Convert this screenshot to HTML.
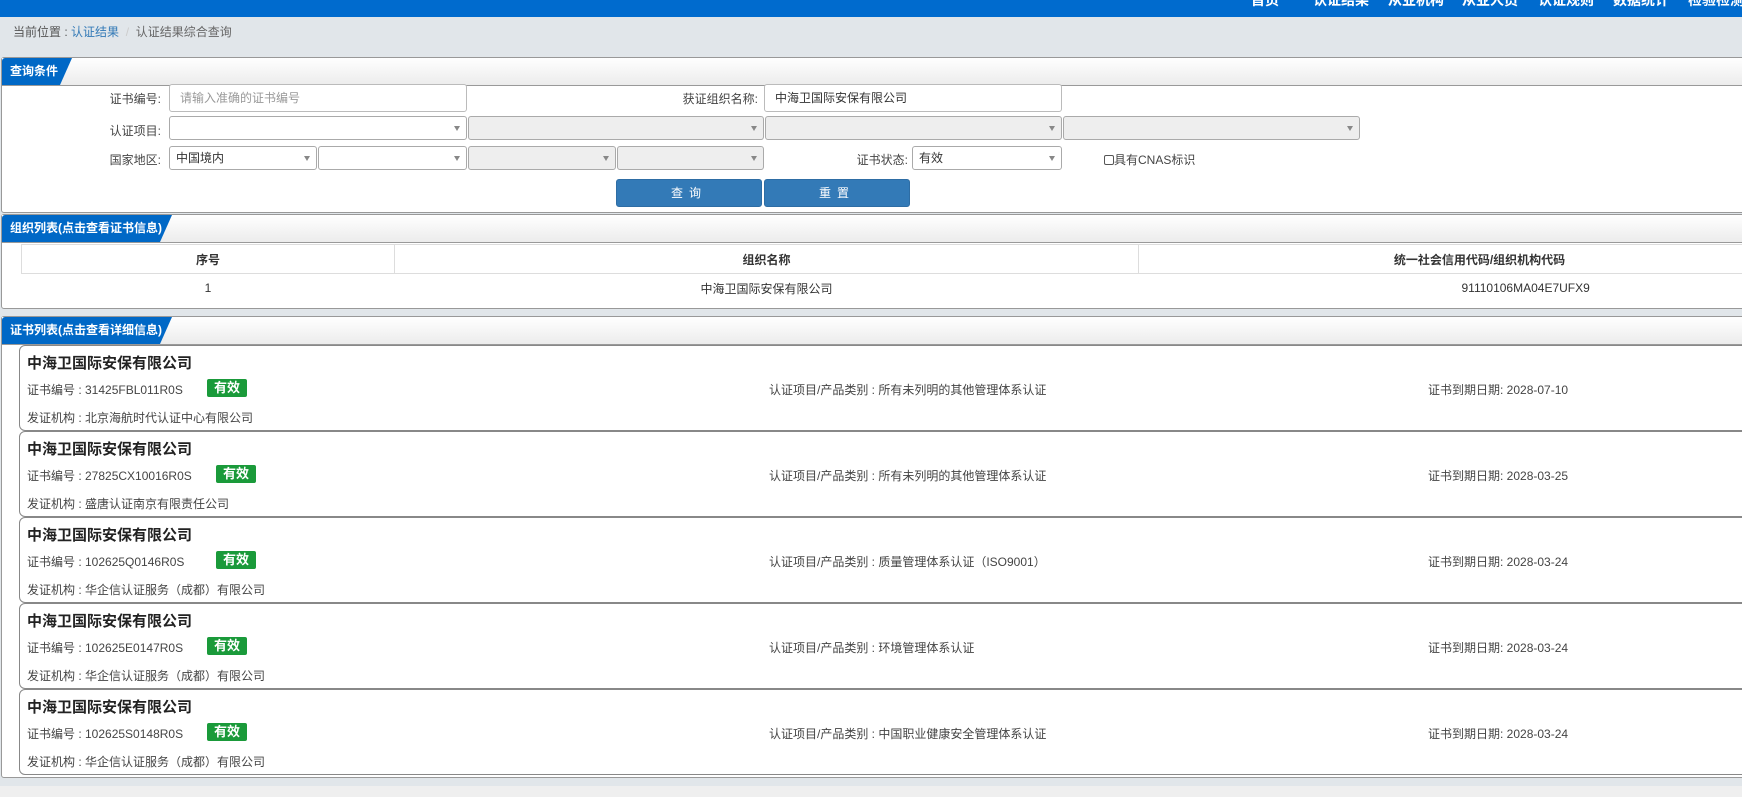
<!DOCTYPE html>
<html><head><meta charset="utf-8"><style>
*{box-sizing:border-box;margin:0;padding:0}
body{width:1742px;height:797px;overflow:hidden;background:#e1e6ea;font-family:"Liberation Sans","Noto Sans CJK SC",sans-serif;font-size:12px;color:#333;position:relative}
.abs{position:absolute}
.nav{left:0;top:0;width:1742px;height:17px;background:#006bce}
.nav span{position:absolute;top:-9px;color:#fff;font-size:14px;font-weight:bold;line-height:18px;white-space:nowrap}
.bc{left:13px;top:23px;font-size:12px;color:#555}
.bc a{color:#337ab7}
.panel{position:absolute;left:1px;width:1800px;background:#fff;border:1px solid #999;border-radius:3px}
.ph{position:absolute;left:0;top:0;right:0;height:28px;background:linear-gradient(#fff,#ececec);border-bottom:1px solid #999}
.tab{position:absolute;left:0;top:0;height:27px;background:#0068c6;color:#fff;font-weight:bold;font-size:12px;line-height:27px;padding-left:8px;clip-path:polygon(0 0,100% 0,calc(100% - 12px) 100%,0 100%);border-top-left-radius:3px;white-space:nowrap}
.lbl{position:absolute;text-align:right;font-size:12px;color:#444}
.inp{position:absolute;border:1px solid #bbb;border-radius:3px;background:#fff;font-size:12px;padding-left:10px;line-height:26px}
.sel{position:absolute;border:1px solid #aaa;border-radius:3px;background:#fff;height:24px;font-size:12px;padding-left:6px;line-height:22px}
.sel.d{background:#eee}
.sel:after{content:"";position:absolute;right:6px;top:9px;border-left:3px solid transparent;border-right:3px solid transparent;border-top:5px solid #888}
.btn{position:absolute;top:179px;height:28px;width:146px;background:#337ab7;border:1px solid #2e6da4;border-radius:3px;color:#fff;text-align:center;line-height:26px;font-size:12px;letter-spacing:6px}
table{position:absolute;left:19px;top:29px;border-collapse:collapse;width:1800px}
th{height:29px;border:1px solid #ddd;font-size:12px;font-weight:bold;text-align:center}
td{height:29px;text-align:center;font-size:12px}
.card{position:absolute;left:19px;width:1800px;height:86px;border:1px solid #888;border-radius:6px;background:#fff}
.card .t{position:absolute;left:7px;top:6px;font-size:15px;font-weight:bold;color:#222}
.card .l{position:absolute;font-size:12px;color:#444}
.badge{position:absolute;top:33px;width:40px;height:18px;background:#1a9a3a;color:#fff;font-weight:bold;text-align:center;line-height:18px;font-size:13px;border-radius:2px}
</style></head><body>
<div class="abs nav">
<span style="left:1251px">首页</span><span style="left:1313px">认证结果</span><span style="left:1388px">从业机构</span><span style="left:1462px">从业人员</span><span style="left:1538px">认证规则</span><span style="left:1613px">数据统计</span><span style="left:1688px">检验检测</span>
</div>
<div class="abs bc">当前位置 : <a>认证结果</a> &nbsp;<span style="color:#ccc">/</span>&nbsp; <span style="color:#666">认证结果综合查询</span></div>

<div class="panel" style="top:57px;height:156px">
<div class="ph"></div><div class="tab" style="width:70px">查询条件</div>
</div>
<div class="lbl" style="left:60px;width:101px;top:90px">证书编号:</div>
<div class="inp" style="left:169px;top:84px;width:298px;height:28px;color:#999">请输入准确的证书编号</div>
<div class="lbl" style="left:600px;width:158px;top:90px">获证组织名称:</div>
<div class="inp" style="left:764px;top:84px;width:298px;height:28px;color:#333">中海卫国际安保有限公司</div>
<div class="lbl" style="left:60px;width:101px;top:122px">认证项目:</div>
<div class="sel" style="left:169px;top:116px;width:298px"></div>
<div class="sel d" style="left:468px;top:116px;width:296px"></div>
<div class="sel d" style="left:765px;top:116px;width:297px"></div>
<div class="sel d" style="left:1063px;top:116px;width:297px"></div>
<div class="lbl" style="left:60px;width:101px;top:151px">国家地区:</div>
<div class="sel" style="left:169px;top:146px;width:148px">中国境内</div>
<div class="sel" style="left:318px;top:146px;width:149px"></div>
<div class="sel d" style="left:468px;top:146px;width:148px"></div>
<div class="sel d" style="left:617px;top:146px;width:147px"></div>
<div class="lbl" style="left:800px;width:108px;top:151px">证书状态:</div>
<div class="sel" style="left:912px;top:146px;width:150px">有效</div>
<div class="abs" style="left:1104px;top:151px;font-size:12px;color:#444"><span style="display:inline-block;width:10px;height:10px;border:1px solid #555;border-radius:2px;vertical-align:-1px"></span>具有CNAS标识</div>
<div class="btn" style="left:616px">查询</div>
<div class="btn" style="left:764px">重置</div>

<div class="panel" style="top:214px;height:95px">
<div class="ph"></div><div class="tab" style="width:170px">组织列表(点击查看证书信息)</div>
<table><tr><th style="width:373px">序号</th><th style="width:744px">组织名称</th><th>统一社会信用代码/组织机构代码</th></tr>
<tr><td>1</td><td>中海卫国际安保有限公司</td><td style="text-align:left;padding-left:323px">91110106MA04E7UFX9</td></tr></table>
</div>

<div class="panel" style="top:316px;height:462px">
<div class="ph"></div><div class="tab" style="width:170px">证书列表(点击查看详细信息)</div>
</div>

<div class="card" style="top:345px"><div class="t">中海卫国际安保有限公司</div><div class="l" style="left:7px;top:35px">证书编号 : 31425FBL011R0S</div><div class="badge" style="left:187px">有效</div><div class="l" style="left:749px;top:35px">认证项目/产品类别 : 所有未列明的其他管理体系认证</div><div class="l" style="left:1408px;top:35px">证书到期日期: 2028-07-10</div><div class="l" style="left:7px;top:63px">发证机构 : 北京海航时代认证中心有限公司</div></div>
<div class="card" style="top:431px"><div class="t">中海卫国际安保有限公司</div><div class="l" style="left:7px;top:35px">证书编号 : 27825CX10016R0S</div><div class="badge" style="left:196px">有效</div><div class="l" style="left:749px;top:35px">认证项目/产品类别 : 所有未列明的其他管理体系认证</div><div class="l" style="left:1408px;top:35px">证书到期日期: 2028-03-25</div><div class="l" style="left:7px;top:63px">发证机构 : 盛唐认证南京有限责任公司</div></div>
<div class="card" style="top:517px"><div class="t">中海卫国际安保有限公司</div><div class="l" style="left:7px;top:35px">证书编号 : 102625Q0146R0S</div><div class="badge" style="left:196px">有效</div><div class="l" style="left:749px;top:35px">认证项目/产品类别 : 质量管理体系认证（ISO9001）</div><div class="l" style="left:1408px;top:35px">证书到期日期: 2028-03-24</div><div class="l" style="left:7px;top:63px">发证机构 : 华企信认证服务（成都）有限公司</div></div>
<div class="card" style="top:603px"><div class="t">中海卫国际安保有限公司</div><div class="l" style="left:7px;top:35px">证书编号 : 102625E0147R0S</div><div class="badge" style="left:187px">有效</div><div class="l" style="left:749px;top:35px">认证项目/产品类别 : 环境管理体系认证</div><div class="l" style="left:1408px;top:35px">证书到期日期: 2028-03-24</div><div class="l" style="left:7px;top:63px">发证机构 : 华企信认证服务（成都）有限公司</div></div>
<div class="card" style="top:689px"><div class="t">中海卫国际安保有限公司</div><div class="l" style="left:7px;top:35px">证书编号 : 102625S0148R0S</div><div class="badge" style="left:187px">有效</div><div class="l" style="left:749px;top:35px">认证项目/产品类别 : 中国职业健康安全管理体系认证</div><div class="l" style="left:1408px;top:35px">证书到期日期: 2028-03-24</div><div class="l" style="left:7px;top:63px">发证机构 : 华企信认证服务（成都）有限公司</div></div>
<div class="abs" style="left:0;top:786px;width:1742px;height:11px;background:#efefef"></div>
</body></html>
